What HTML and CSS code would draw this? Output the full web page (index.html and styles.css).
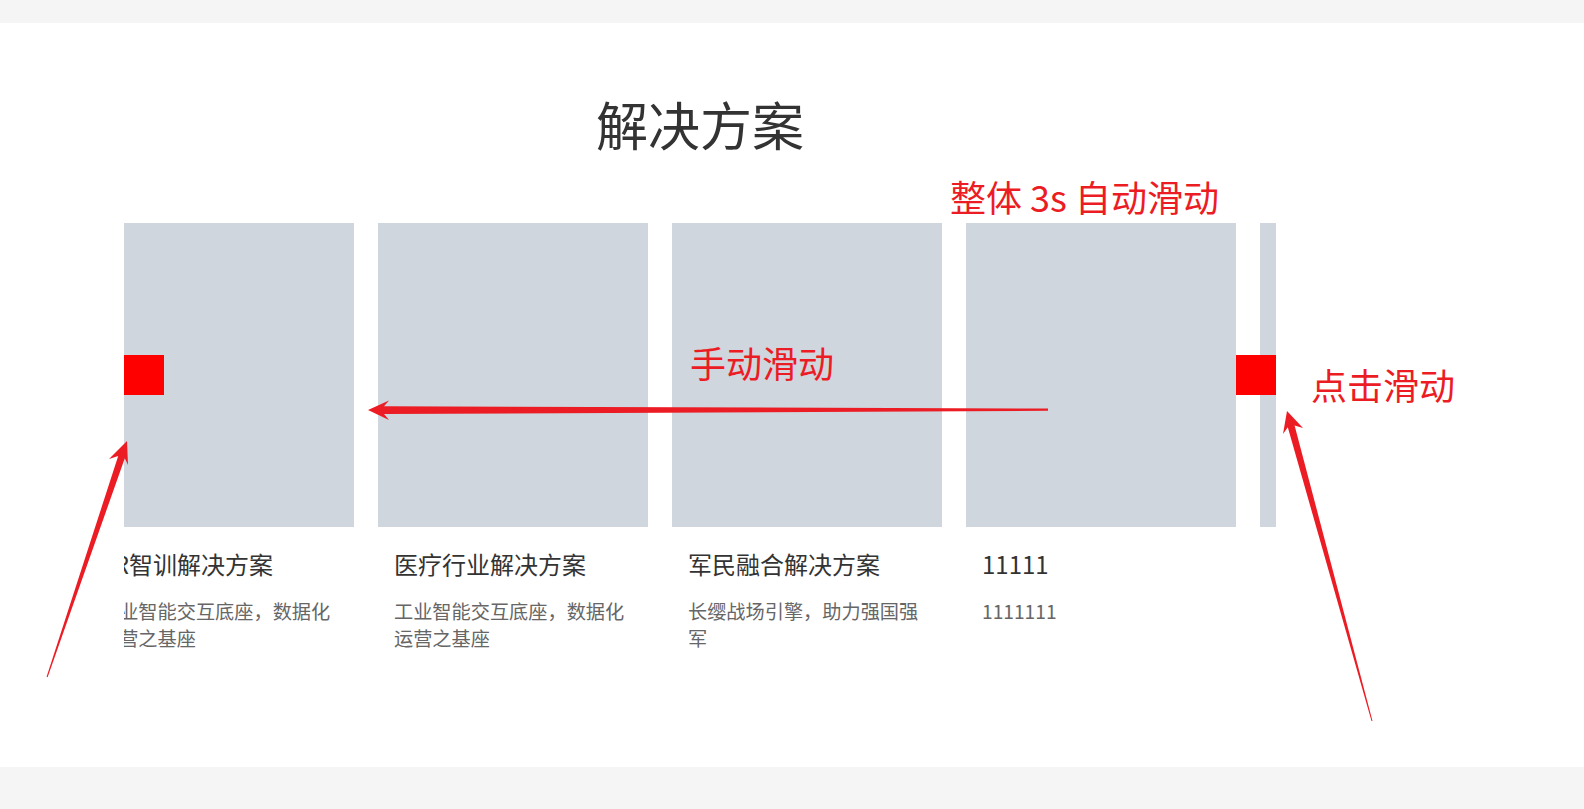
FILE: index.html
```html
<!DOCTYPE html>
<html lang="zh-CN">
<head>
<meta charset="utf-8">
<title>解决方案</title>
<link rel="stylesheet" href="styles.css">
</head>
<body>
<div class="top-band"></div>
<main class="page">
  <section class="solutions">
    <h1 class="solutions-title">解决方案</h1>
    <div class="carousel">
      <div class="track">
        <div class="card">
          <div class="card-img"></div>
          <div class="card-title">VR智训解决方案</div>
          <div class="card-desc">工业智能交互底座，数据化运营之基座</div>
        </div>
        <div class="card">
          <div class="card-img"></div>
          <div class="card-title">医疗行业解决方案</div>
          <div class="card-desc">工业智能交互底座，数据化运营之基座</div>
        </div>
        <div class="card">
          <div class="card-img"></div>
          <div class="card-title">军民融合解决方案</div>
          <div class="card-desc">长缨战场引擎，助力强国强军</div>
        </div>
        <div class="card">
          <div class="card-img"></div>
          <div class="card-title">11111</div>
          <div class="card-desc">1111111</div>
        </div>
        <div class="card">
          <div class="card-img"></div>
          <div class="card-title">VR智训解决方案</div>
          <div class="card-desc">工业智能交互底座，数据化运营之基座</div>
        </div>
      </div>
      <button class="nav-btn nav-prev" aria-label="上一个"></button>
      <button class="nav-btn nav-next" aria-label="下一个"></button>
    </div>
  </section>
</main>
<div class="bottom-band"></div>

<div class="notes">
  <svg class="notes-arrows" width="1584" height="809" viewBox="0 0 1584 809">
    <polygon class="arrow" points="368,410 389,400.5 384,406.3 1048,408.6 1048,410.8 384,414 389,420"/>
    <polygon class="arrow" points="127,441 128,465 124.8,458.2 47.6,677.2 46.6,676.8 118.2,456 109,459"/>
    <polygon class="arrow" points="1287,411 1303,428 1294.6,425.5 1372.5,720.9 1371.5,721.1 1287.8,427.3 1283,434"/>
  </svg>
  <div class="note note-auto">整体 3s 自动滑动</div>
  <div class="note note-manual">手动滑动</div>
  <div class="note note-click">点击滑动</div>
</div>
</body>
</html>
```

FILE: styles.css
```css
html, body {
  margin: 0;
  padding: 0;
}
body {
  background: #f5f5f5;
  font-family: "Noto Sans CJK SC", "Noto Sans", sans-serif;
  width: 1584px;
  height: 809px;
  overflow: hidden;
  position: relative;
}
.top-band {
  height: 23px;
}
.page {
  background: #ffffff;
  height: 744px;
  display: block;
}
.solutions {
  width: 1152px;
  margin-left: 124px;
  padding-top: 62px;
}
.solutions-title {
  margin: 0;
  font-size: 52px;
  line-height: 78px;
  font-weight: 400;
  color: #333333;
  text-align: center;
}
.carousel {
  margin-top: 60px;
  width: 1152px;
  overflow: hidden;
  position: relative;
}
.track {
  display: flex;
  gap: 24px;
  transform: translateX(-40px);
}
.card {
  flex: 0 0 270px;
  width: 270px;
}
.card-img {
  height: 304px;
  background: #cfd6dd;
}
.card-title {
  margin-top: 19px;
  padding: 0 16px;
  font-size: 24px;
  line-height: 36px;
  color: #333333;
  white-space: nowrap;
}
.card-desc {
  margin-top: 16px;
  padding: 0 16px;
  font-size: 19.2px;
  line-height: 27px;
  color: #666666;
}
.nav-btn {
  position: absolute;
  top: 132px;
  width: 40px;
  height: 40px;
  border: 0;
  padding: 0;
  background: #ff0000;
}
.nav-prev { left: 0; }
.nav-next { right: 0; }
.bottom-band {
  height: 42px;
}
.notes {
  position: absolute;
  left: 0;
  top: 0;
  width: 1584px;
  height: 809px;
  pointer-events: none;
}
.notes-arrows {
  position: absolute;
  left: 0;
  top: 0;
}
.arrow {
  fill: #ec1c24;
}
.note {
  position: absolute;
  font-size: 36px;
  line-height: 1;
  color: #ec1c24;
  white-space: nowrap;
}
.note-auto { left: 950px; top: 178px; }
.note-manual { left: 690px; top: 344px; }
.note-click { left: 1311px; top: 366px; }
```
